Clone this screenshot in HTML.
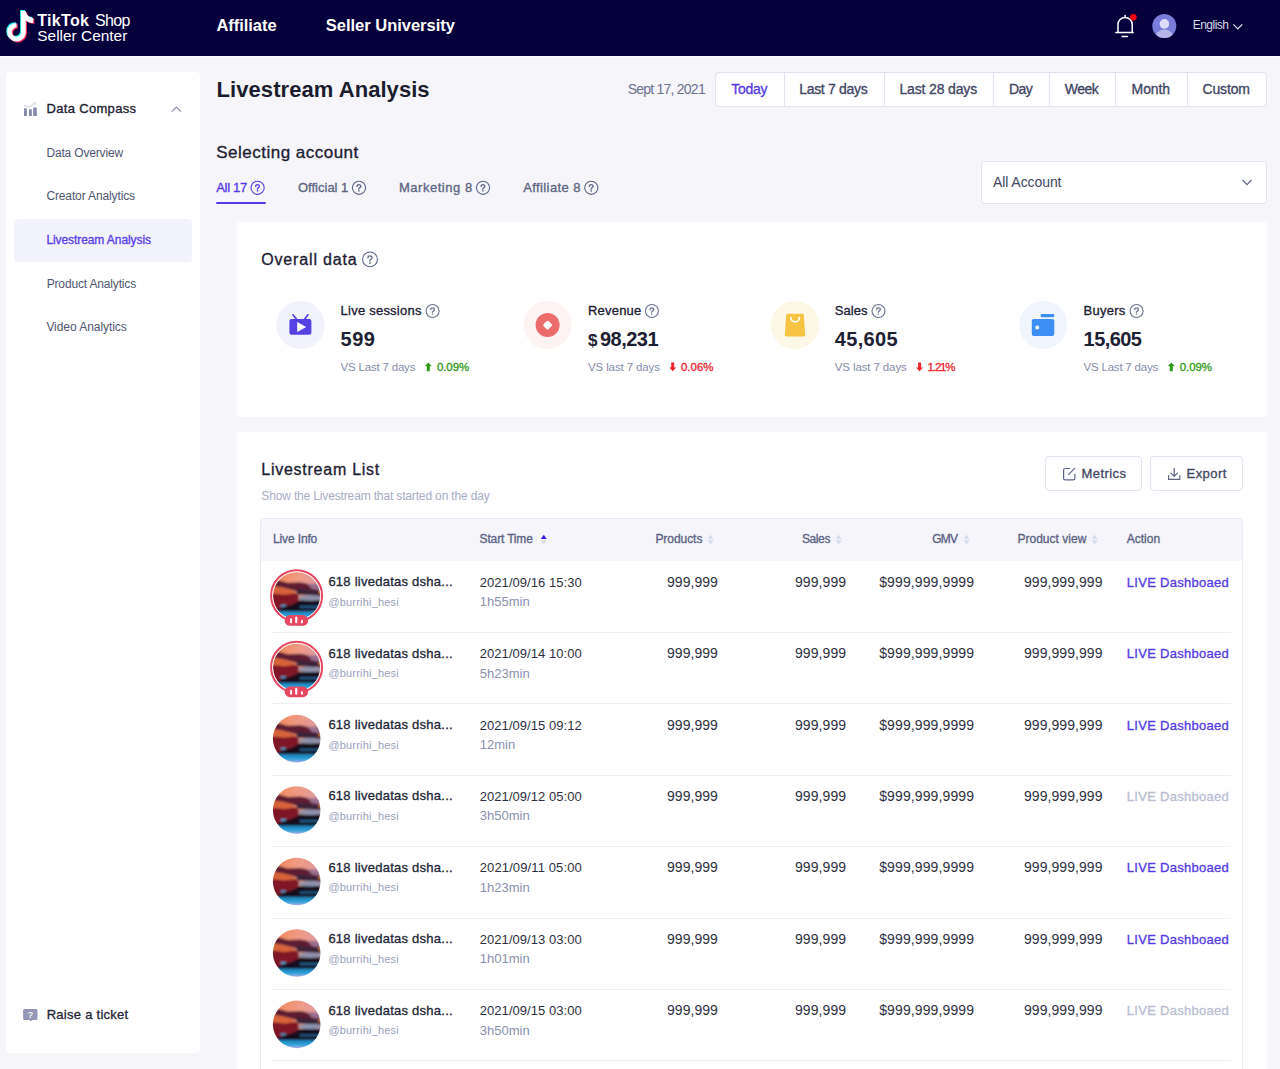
<!DOCTYPE html>
<html><head><meta charset="utf-8"><title>Livestream Analysis</title>
<style>
html,body{margin:0;padding:0;}
body{width:1280px;height:1069px;overflow:hidden;position:relative;background:#f5f5fa;font-family:"Liberation Sans", sans-serif;}
.t{position:absolute;white-space:nowrap;line-height:1;}
.a{position:absolute;box-sizing:border-box;}
svg{position:absolute;overflow:visible;}
</style></head><body>
<div class="a" style="left:0;top:0;width:1280px;height:56px;background:#05003c"></div>
<div class="a" style="left:0;top:56px;width:1280px;height:1px;background:#fbfbfe"></div>
<svg width="1" height="1" style="left:0;top:0"><path d="M21.1 11H25.8C26.1 14.5 28.8 17.5 33.2 18V23C30.3 23 27.8 22 25.8 20.5V32.2A9.3 9.3 0 1 1 16.5 22.9V27.6A4.6 4.6 0 1 0 21.1 32.2Z" fill="#25f4ee" transform="translate(-1,-1)"/><path d="M21.1 11H25.8C26.1 14.5 28.8 17.5 33.2 18V23C30.3 23 27.8 22 25.8 20.5V32.2A9.3 9.3 0 1 1 16.5 22.9V27.6A4.6 4.6 0 1 0 21.1 32.2Z" fill="#fe2c55" transform="translate(1.2,1)"/><path d="M21.1 11H25.8C26.1 14.5 28.8 17.5 33.2 18V23C30.3 23 27.8 22 25.8 20.5V32.2A9.3 9.3 0 1 1 16.5 22.9V27.6A4.6 4.6 0 1 0 21.1 32.2Z" fill="#fff"/></svg>
<div class="t" style="left:37.30px;top:13.00px;font-size:16px;font-weight:bold;color:#fff;letter-spacing:0.301px;">TikTok</div>
<div class="t" style="left:94.90px;top:13.00px;font-size:16px;color:#fff;letter-spacing:-0.592px;">Shop</div>
<div class="t" style="left:37.30px;top:28.00px;font-size:15.4px;color:#fff;letter-spacing:0.014px;">Seller Center</div>
<div class="t" style="left:216.40px;top:17.00px;font-size:16.5px;font-weight:bold;color:#fff;letter-spacing:-0.039px;">Affiliate</div>
<div class="t" style="left:325.80px;top:17.00px;font-size:16.5px;font-weight:bold;color:#fff;letter-spacing:-0.014px;">Seller University</div>
<svg width="1" height="1" style="left:0;top:0"><g fill="none" stroke="#fff" stroke-width="1.5" stroke-linecap="round"><path d="M1118 32.4V24.5A7.1 7.1 0 0 1 1132.2 24.5V32.4"/><path d="M1115.8 32.4H1133.2"/><path d="M1125.1 15.6V17.4"/><path d="M1122.2 36.4H1127.4"/></g><circle cx="1133.4" cy="17.3" r="3.3" fill="#f40010"/></svg>
<svg width="1" height="1" style="left:0;top:0"><defs><clipPath id="avc"><circle cx="1164.3" cy="26" r="12"/></clipPath></defs><circle cx="1164.3" cy="26" r="12" fill="#7a7cda"/><g clip-path="url(#avc)"><ellipse cx="1164.3" cy="39" rx="9.5" ry="9.5" fill="#b6b5ea"/></g><circle cx="1164.4" cy="23.9" r="4.8" fill="#dddcf8"/></svg>
<div class="t" style="left:1192.65px;top:19.00px;font-size:12px;color:#d8d8ea;letter-spacing:-0.493px;">English</div>
<svg width="1" height="1" style="left:0;top:0"><polyline points="1233.3,24.4 1237.8,28.9 1242.3,24.4" fill="none" stroke="#d8d8ea" stroke-width="1.3"/></svg>
<div class="a" style="left:6px;top:72px;width:194px;height:981px;background:#fff;border-radius:4px"></div>
<svg width="1" height="1" style="left:0;top:0"><g fill="#8589ab"><rect x="24" y="108.2" width="2.9" height="7.7" rx="0.5"/><rect x="28.95" y="109.2" width="2.9" height="6.7" rx="0.5"/><rect x="33.2" y="107.5" width="3.6" height="8.4" rx="0.5"/></g><polyline points="24.1,105.6 29,106.8 33.4,104.6" fill="none" stroke="#d5d8e6" stroke-width="1.4"/><path d="M32.6 102.6L36.2 102.6L35.2 106Z" fill="#d5d8e6"/></svg>
<div class="t" style="left:46.60px;top:102.00px;font-size:13px;color:#1d2033;-webkit-text-stroke:0.32px #1d2033;letter-spacing:0.311px;">Data Compass</div>
<svg width="1" height="1" style="left:0;top:0"><polyline points="171.8,111.6 176.4,107 181,111.6" fill="none" stroke="#8a8fa8" stroke-width="1.2"/></svg>
<div class="t" style="left:46.40px;top:147.00px;font-size:12px;color:#4f5672;letter-spacing:-0.167px;">Data Overview</div>
<div class="t" style="left:46.40px;top:190.00px;font-size:12px;color:#4f5672;letter-spacing:-0.125px;">Creator Analytics</div>
<div class="a" style="left:14px;top:219px;width:178px;height:43px;background:#f3f3fe;border-radius:4px"></div>
<div class="t" style="left:46.40px;top:234.00px;font-size:12px;color:#5a3ee6;-webkit-text-stroke:0.32px #5a3ee6;letter-spacing:-0.080px;">Livestream Analysis</div>
<div class="t" style="left:46.70px;top:278.00px;font-size:12px;color:#4f5672;letter-spacing:-0.159px;">Product Analytics</div>
<div class="t" style="left:46.40px;top:321.00px;font-size:12px;color:#4f5672;letter-spacing:-0.055px;">Video Analytics</div>
<svg width="1" height="1" style="left:0;top:0"><path d="M24.6 1009H36C36.8 1009 37.5 1009.7 37.5 1010.5V1018.4C37.5 1019.2 36.8 1019.9 36 1019.9H32.4L31 1021.2L29.6 1019.9H24.6C23.8 1019.9 23.1 1019.2 23.1 1018.4V1010.5C23.1 1009.7 23.8 1009 24.6 1009Z" fill="#9497b8"/></svg>
<div class="t" style="left:27.79px;top:1011.00px;font-size:9px;color:#fff;-webkit-text-stroke:0.2px #fff;">?</div>
<div class="t" style="left:46.70px;top:1008.00px;font-size:13px;color:#252838;-webkit-text-stroke:0.32px #252838;letter-spacing:0.266px;">Raise a ticket</div>
<div class="t" style="left:216.60px;top:79.00px;font-size:22px;font-weight:bold;color:#1b1d2e;letter-spacing:0.057px;">Livestream Analysis</div>
<div class="t" style="left:627.70px;top:82.00px;font-size:14px;color:#6c7290;letter-spacing:-0.766px;">Sept 17, 2021</div>
<div class="a" style="left:715px;top:72px;width:551.5px;height:35px;background:#fff;border:1px solid #e1e3f1;border-radius:4px"></div>
<div class="a" style="left:783.5px;top:73px;width:1px;height:33px;background:#e1e3f1"></div>
<div class="a" style="left:883.5px;top:73px;width:1px;height:33px;background:#e1e3f1"></div>
<div class="a" style="left:993px;top:73px;width:1px;height:33px;background:#e1e3f1"></div>
<div class="a" style="left:1048.5px;top:73px;width:1px;height:33px;background:#e1e3f1"></div>
<div class="a" style="left:1115px;top:73px;width:1px;height:33px;background:#e1e3f1"></div>
<div class="a" style="left:1186.5px;top:73px;width:1px;height:33px;background:#e1e3f1"></div>
<div class="t" style="left:731.20px;top:82.00px;font-size:14px;color:#553be6;-webkit-text-stroke:0.32px #553be6;letter-spacing:-0.265px;">Today</div>
<div class="t" style="left:799.20px;top:82.00px;font-size:14px;color:#3f4663;-webkit-text-stroke:0.32px #3f4663;letter-spacing:-0.301px;">Last 7 days</div>
<div class="t" style="left:899.40px;top:82.00px;font-size:14px;color:#3f4663;-webkit-text-stroke:0.32px #3f4663;letter-spacing:-0.145px;">Last 28 days</div>
<div class="t" style="left:1009.00px;top:82.00px;font-size:14px;color:#3f4663;-webkit-text-stroke:0.32px #3f4663;letter-spacing:-0.553px;">Day</div>
<div class="t" style="left:1064.70px;top:82.00px;font-size:14px;color:#3f4663;-webkit-text-stroke:0.32px #3f4663;letter-spacing:-0.516px;">Week</div>
<div class="t" style="left:1131.60px;top:82.00px;font-size:14px;color:#3f4663;-webkit-text-stroke:0.32px #3f4663;letter-spacing:-0.130px;">Month</div>
<div class="t" style="left:1202.50px;top:82.00px;font-size:14px;color:#3f4663;-webkit-text-stroke:0.32px #3f4663;letter-spacing:-0.147px;">Custom</div>
<div class="t" style="left:216.25px;top:144.00px;font-size:17px;color:#1d2033;-webkit-text-stroke:0.32px #1d2033;letter-spacing:0.487px;">Selecting account</div>
<div class="t" style="left:216.25px;top:181.00px;font-size:13px;color:#553be6;-webkit-text-stroke:0.32px #553be6;letter-spacing:-0.306px;">All 17</div>
<svg width="1" height="1" style="left:0;top:0"><g transform="translate(257.6,187.8) scale(0.892)" fill="none" stroke="#553be6"><circle r="7.4" stroke-width="1.23"/><path d="M-2.1 -1.5C-2.1 -2.8 -1.2 -3.5 0 -3.5C1.2 -3.5 2.1 -2.7 2.1 -1.6C2.1 -0.3 -0.1 0.2 -0.3 1.4" stroke-width="1.46" stroke-linecap="round"/><circle cx="-0.1" cy="3.5" r="0.9" fill="#553be6" stroke="none"/></g></svg>
<div class="t" style="left:298.00px;top:181.00px;font-size:13px;color:#5d6584;-webkit-text-stroke:0.32px #5d6584;">Official 1</div>
<svg width="1" height="1" style="left:0;top:0"><g transform="translate(359,187.8) scale(0.892)" fill="none" stroke="#5d6584"><circle r="7.4" stroke-width="1.23"/><path d="M-2.1 -1.5C-2.1 -2.8 -1.2 -3.5 0 -3.5C1.2 -3.5 2.1 -2.7 2.1 -1.6C2.1 -0.3 -0.1 0.2 -0.3 1.4" stroke-width="1.46" stroke-linecap="round"/><circle cx="-0.1" cy="3.5" r="0.9" fill="#5d6584" stroke="none"/></g></svg>
<div class="t" style="left:398.90px;top:181.00px;font-size:13px;color:#5d6584;-webkit-text-stroke:0.32px #5d6584;letter-spacing:0.538px;">Marketing 8</div>
<svg width="1" height="1" style="left:0;top:0"><g transform="translate(483,187.8) scale(0.892)" fill="none" stroke="#5d6584"><circle r="7.4" stroke-width="1.23"/><path d="M-2.1 -1.5C-2.1 -2.8 -1.2 -3.5 0 -3.5C1.2 -3.5 2.1 -2.7 2.1 -1.6C2.1 -0.3 -0.1 0.2 -0.3 1.4" stroke-width="1.46" stroke-linecap="round"/><circle cx="-0.1" cy="3.5" r="0.9" fill="#5d6584" stroke="none"/></g></svg>
<div class="t" style="left:523.20px;top:181.00px;font-size:13px;color:#5d6584;-webkit-text-stroke:0.32px #5d6584;letter-spacing:0.395px;">Affiliate 8</div>
<svg width="1" height="1" style="left:0;top:0"><g transform="translate(591.3,187.8) scale(0.892)" fill="none" stroke="#5d6584"><circle r="7.4" stroke-width="1.23"/><path d="M-2.1 -1.5C-2.1 -2.8 -1.2 -3.5 0 -3.5C1.2 -3.5 2.1 -2.7 2.1 -1.6C2.1 -0.3 -0.1 0.2 -0.3 1.4" stroke-width="1.46" stroke-linecap="round"/><circle cx="-0.1" cy="3.5" r="0.9" fill="#5d6584" stroke="none"/></g></svg>
<div class="a" style="left:216px;top:202px;width:49.6px;height:2px;background:#553be6;border-radius:1px"></div>
<div class="a" style="left:981px;top:160.5px;width:285.5px;height:43px;background:#fff;border:1px solid #e1e3f1;border-radius:4px"></div>
<div class="t" style="left:993.00px;top:175.00px;font-size:14px;color:#3f4663;letter-spacing:-0.077px;">All Account</div>
<svg width="1" height="1" style="left:0;top:0"><polyline points="1242.6,180 1247,184.6 1251.4,180" fill="none" stroke="#5d6584" stroke-width="1.2"/></svg>
<div class="a" style="left:237px;top:222px;width:1029.5px;height:194.5px;background:#fff;border-radius:4px"></div>
<div class="t" style="left:261.25px;top:252.00px;font-size:16px;color:#1d2033;-webkit-text-stroke:0.32px #1d2033;letter-spacing:0.839px;">Overall data</div>
<svg width="1" height="1" style="left:0;top:0"><g transform="translate(370,259.4) scale(1.000)" fill="none" stroke="#5d6585"><circle r="7.4" stroke-width="1.10"/><path d="M-2.1 -1.5C-2.1 -2.8 -1.2 -3.5 0 -3.5C1.2 -3.5 2.1 -2.7 2.1 -1.6C2.1 -0.3 -0.1 0.2 -0.3 1.4" stroke-width="1.30" stroke-linecap="round"/><circle cx="-0.1" cy="3.5" r="0.9" fill="#5d6585" stroke="none"/></g></svg>
<svg width="1" height="1" style="left:0;top:0"><circle cx="300.5" cy="325" r="24" fill="#f2f2fd"/><rect x="289.4" y="318.9" width="22" height="15.8" rx="2" fill="#5641e3"/><path d="M293 314.8L296.3 319M308 314.8L304.7 319" stroke="#5641e3" stroke-width="1.7" stroke-linecap="round"/><path d="M297.6 322.6L305.4 327L297.6 331.4Z" fill="#fff" stroke="#fff" stroke-width="0.8" stroke-linejoin="round"/><circle cx="547.6" cy="325" r="24" fill="#fdf3f3"/><circle cx="547.6" cy="325" r="12" fill="#ec6b6b"/><rect x="544.1" y="321.6" width="7" height="7" rx="1.5" fill="#fff" transform="rotate(45 547.6 325.1)"/><circle cx="795" cy="325" r="24" fill="#fdf8e6"/><path d="M787.5 313.7H802.5C803.2 313.7 803.7 314.2 803.8 314.9L805.2 334.8C805.3 335.7 804.6 336.4 803.7 336.4H786.3C785.4 336.4 784.7 335.7 784.8 334.8L786.2 314.9C786.3 314.2 786.8 313.7 787.5 313.7Z" fill="#f6c343"/><path d="M790.8 317.6A4.3 4.3 0 0 0 799.4 317.6" fill="none" stroke="#fff" stroke-width="1.6" stroke-linecap="round"/><circle cx="1043.3" cy="325" r="24" fill="#f0f5fe"/><rect x="1031.8" y="318.9" width="22.5" height="17.2" rx="2" fill="#3d8ff5"/><rect x="1040.6" y="314" width="13.7" height="3.3" rx="1.3" fill="#3d8ff5"/><circle cx="1037.2" cy="327.5" r="1.9" fill="#fff"/></svg>
<div class="t" style="left:340.60px;top:304.00px;font-size:13px;color:#1d2033;-webkit-text-stroke:0.32px #1d2033;letter-spacing:0.229px;">Live sessions</div>
<svg width="1" height="1" style="left:0;top:0"><g transform="translate(432.6,311) scale(0.878)" fill="none" stroke="#6b7290"><circle r="7.4" stroke-width="1.25"/><path d="M-2.1 -1.5C-2.1 -2.8 -1.2 -3.5 0 -3.5C1.2 -3.5 2.1 -2.7 2.1 -1.6C2.1 -0.3 -0.1 0.2 -0.3 1.4" stroke-width="1.48" stroke-linecap="round"/><circle cx="-0.1" cy="3.5" r="0.9" fill="#6b7290" stroke="none"/></g></svg>
<div class="t" style="left:340.60px;top:329.00px;font-size:20px;font-weight:bold;color:#1d2033;letter-spacing:0.512px;">599</div>
<div class="t" style="left:340.60px;top:362.00px;font-size:11.5px;color:#868ca9;letter-spacing:-0.197px;">VS Last 7 days</div>
<svg width="1" height="1" style="left:0;top:0"><path d="M428.3 362.5L431.8 366.3H429.8V371.2H426.8V366.3H424.8Z" fill="#2f9a17"/></svg>
<div class="t" style="left:436.90px;top:362.00px;font-size:11.5px;color:#2f9a17;-webkit-text-stroke:0.32px #2f9a17;letter-spacing:-0.077px;">0.09%</div>
<div class="t" style="left:588.00px;top:304.00px;font-size:13px;color:#1d2033;-webkit-text-stroke:0.32px #1d2033;letter-spacing:0.209px;">Revenue</div>
<svg width="1" height="1" style="left:0;top:0"><g transform="translate(651.9,311) scale(0.878)" fill="none" stroke="#6b7290"><circle r="7.4" stroke-width="1.25"/><path d="M-2.1 -1.5C-2.1 -2.8 -1.2 -3.5 0 -3.5C1.2 -3.5 2.1 -2.7 2.1 -1.6C2.1 -0.3 -0.1 0.2 -0.3 1.4" stroke-width="1.48" stroke-linecap="round"/><circle cx="-0.1" cy="3.5" r="0.9" fill="#6b7290" stroke="none"/></g></svg>
<div class="t" style="left:588.00px;top:332.00px;font-size:17px;font-weight:bold;color:#1d2033;">$</div>
<div class="t" style="left:600.00px;top:329.00px;font-size:20px;font-weight:bold;color:#1d2033;letter-spacing:-0.534px;">98,231</div>
<div class="t" style="left:588.00px;top:362.00px;font-size:11.5px;color:#868ca9;letter-spacing:-0.117px;">VS last 7 days</div>
<svg width="1" height="1" style="left:0;top:0"><path d="M672.7 371.2L676.2 367.4H674.2V362.5H671.2V367.4H669.2Z" fill="#f0242b"/></svg>
<div class="t" style="left:680.90px;top:362.00px;font-size:11.5px;color:#f0242b;-webkit-text-stroke:0.32px #f0242b;">0.06%</div>
<div class="t" style="left:834.80px;top:304.00px;font-size:13px;color:#1d2033;-webkit-text-stroke:0.32px #1d2033;letter-spacing:0.017px;">Sales</div>
<svg width="1" height="1" style="left:0;top:0"><g transform="translate(878.5,311) scale(0.878)" fill="none" stroke="#6b7290"><circle r="7.4" stroke-width="1.25"/><path d="M-2.1 -1.5C-2.1 -2.8 -1.2 -3.5 0 -3.5C1.2 -3.5 2.1 -2.7 2.1 -1.6C2.1 -0.3 -0.1 0.2 -0.3 1.4" stroke-width="1.48" stroke-linecap="round"/><circle cx="-0.1" cy="3.5" r="0.9" fill="#6b7290" stroke="none"/></g></svg>
<div class="t" style="left:834.80px;top:329.00px;font-size:20px;font-weight:bold;color:#1d2033;letter-spacing:0.306px;">45,605</div>
<div class="t" style="left:834.80px;top:362.00px;font-size:11.5px;color:#868ca9;letter-spacing:-0.117px;">VS last 7 days</div>
<svg width="1" height="1" style="left:0;top:0"><path d="M919.6 371.2L923.1 367.4H921.1V362.5H918.1V367.4H916.1Z" fill="#f0242b"/></svg>
<div class="t" style="left:927.60px;top:362.00px;font-size:11.5px;color:#f0242b;-webkit-text-stroke:0.32px #f0242b;letter-spacing:-1.152px;">1.21%</div>
<div class="t" style="left:1083.60px;top:304.00px;font-size:13px;color:#1d2033;-webkit-text-stroke:0.32px #1d2033;letter-spacing:0.226px;">Buyers</div>
<svg width="1" height="1" style="left:0;top:0"><g transform="translate(1136.6,311) scale(0.878)" fill="none" stroke="#6b7290"><circle r="7.4" stroke-width="1.25"/><path d="M-2.1 -1.5C-2.1 -2.8 -1.2 -3.5 0 -3.5C1.2 -3.5 2.1 -2.7 2.1 -1.6C2.1 -0.3 -0.1 0.2 -0.3 1.4" stroke-width="1.48" stroke-linecap="round"/><circle cx="-0.1" cy="3.5" r="0.9" fill="#6b7290" stroke="none"/></g></svg>
<div class="t" style="left:1083.60px;top:329.00px;font-size:20px;font-weight:bold;color:#1d2033;letter-spacing:-0.554px;">15,605</div>
<div class="t" style="left:1083.60px;top:362.00px;font-size:11.5px;color:#868ca9;letter-spacing:-0.212px;">VS Last 7 days</div>
<svg width="1" height="1" style="left:0;top:0"><path d="M1171.3 362.5L1174.8 366.3H1172.8V371.2H1169.8V366.3H1167.8Z" fill="#2f9a17"/></svg>
<div class="t" style="left:1179.80px;top:362.00px;font-size:11.5px;color:#2f9a17;-webkit-text-stroke:0.32px #2f9a17;letter-spacing:-0.102px;">0.09%</div>
<div class="a" style="left:237px;top:432px;width:1029.5px;height:700px;background:#fff;border-radius:4px"></div>
<div class="t" style="left:261.30px;top:462.00px;font-size:16px;color:#1d2033;-webkit-text-stroke:0.32px #1d2033;letter-spacing:0.743px;">Livestream List</div>
<div class="t" style="left:261.30px;top:490.00px;font-size:12px;color:#a7acc5;letter-spacing:-0.150px;">Show the Livestream that started on the day</div>
<div class="a" style="left:1045.3px;top:456.2px;width:97px;height:35.2px;background:#fff;border:1px solid #e1e3f1;border-radius:4px"></div>
<div class="a" style="left:1150.2px;top:456.2px;width:92.4px;height:35.2px;background:#fff;border:1px solid #e1e3f1;border-radius:4px"></div>
<div class="t" style="left:1081.40px;top:467.00px;font-size:13px;color:#3f4663;-webkit-text-stroke:0.32px #3f4663;letter-spacing:0.468px;">Metrics</div>
<div class="t" style="left:1186.60px;top:467.00px;font-size:13px;color:#3f4663;-webkit-text-stroke:0.32px #3f4663;letter-spacing:0.424px;">Export</div>
<svg width="1" height="1" style="left:0;top:0"><g fill="none" stroke="#5d6584" stroke-width="1.2" stroke-linecap="round" stroke-linejoin="round"><path d="M1069.5 468.5H1065.2C1064.3 468.5 1063.6 469.2 1063.6 470.1V478.2C1063.6 479.1 1064.3 479.8 1065.2 479.8H1073.3C1074.2 479.8 1074.9 479.1 1074.9 478.2V474"/><path d="M1068.6 474.6L1074.6 468.4"/><path d="M1174.2 468.3V476.2M1171 473.2L1174.2 476.4L1177.4 473.2"/><path d="M1168.6 475.5V479.4H1179.8V475.5"/></g></svg>
<div class="a" style="left:260.2px;top:518px;width:983.3px;height:620px;border:1px solid #e9eaf4;border-radius:4px;background:#fff;overflow:hidden"><div style="position:absolute;left:0;top:0;right:0;height:41.5px;background:#f5f5fa"></div></div>
<div class="t" style="left:273.00px;top:533.00px;font-size:12px;color:#5c6385;-webkit-text-stroke:0.32px #5c6385;letter-spacing:-0.134px;">Live Info</div>
<div class="t" style="left:479.60px;top:533.00px;font-size:12px;color:#5c6385;-webkit-text-stroke:0.32px #5c6385;letter-spacing:-0.154px;">Start Time</div>
<svg width="1" height="1" style="left:0;top:0"><path d="M540.8 538.9L543.8 534.8L546.8 538.9Z" fill="#3a1fe0"/><path d="M540.8 540.3L543.8 544.4L546.8 540.3Z" fill="#d8dcec"/></svg>
<div class="t" style="left:655.40px;top:533.00px;font-size:12px;color:#5c6385;-webkit-text-stroke:0.32px #5c6385;letter-spacing:-0.051px;">Products</div>
<svg width="1" height="1" style="left:0;top:0"><path d="M707.7 538.9L710.7 534.8L713.7 538.9Z" fill="#d8dcec"/><path d="M707.7 540.3L710.7 544.4L713.7 540.3Z" fill="#d8dcec"/></svg>
<div class="t" style="left:802.00px;top:533.00px;font-size:12px;color:#5c6385;-webkit-text-stroke:0.32px #5c6385;letter-spacing:-0.408px;">Sales</div>
<svg width="1" height="1" style="left:0;top:0"><path d="M835.8 538.9L838.8 534.8L841.8 538.9Z" fill="#d8dcec"/><path d="M835.8 540.3L838.8 544.4L841.8 540.3Z" fill="#d8dcec"/></svg>
<div class="t" style="left:932.20px;top:533.00px;font-size:12px;color:#5c6385;-webkit-text-stroke:0.32px #5c6385;letter-spacing:-0.772px;">GMV</div>
<svg width="1" height="1" style="left:0;top:0"><path d="M963.7 538.9L966.7 534.8L969.7 538.9Z" fill="#d8dcec"/><path d="M963.7 540.3L966.7 544.4L969.7 540.3Z" fill="#d8dcec"/></svg>
<div class="t" style="left:1017.40px;top:533.00px;font-size:12px;color:#5c6385;-webkit-text-stroke:0.32px #5c6385;letter-spacing:0.027px;">Product view</div>
<svg width="1" height="1" style="left:0;top:0"><path d="M1091.8 538.9L1094.8 534.8L1097.8 538.9Z" fill="#d8dcec"/><path d="M1091.8 540.3L1094.8 544.4L1097.8 540.3Z" fill="#d8dcec"/></svg>
<div class="t" style="left:1126.70px;top:533.00px;font-size:12px;color:#5c6385;-webkit-text-stroke:0.32px #5c6385;letter-spacing:0.028px;">Action</div>
<svg width="0" height="0" style="left:0;top:0"><defs><linearGradient id="sky" x1="0" y1="0" x2="1" y2="0.2"><stop offset="0" stop-color="#f5844f"/><stop offset="0.55" stop-color="#f09a84"/><stop offset="1" stop-color="#d99aa4"/></linearGradient><linearGradient id="sea" x1="0" y1="0" x2="0" y2="1"><stop offset="0" stop-color="#1f7fb8"/><stop offset="0.55" stop-color="#2ba3da"/><stop offset="1" stop-color="#b9b3f4"/></linearGradient><filter id="avblur" x="-5%" y="-5%" width="110%" height="110%"><feGaussianBlur stdDeviation="0.9"/></filter><clipPath id="avclip"><circle cx="24" cy="24" r="23.8"/></clipPath><symbol id="avimg" viewBox="0 0 48 48"><g clip-path="url(#avclip)"><g filter="url(#avblur)"><rect x="-2" y="-2" width="52" height="52" fill="url(#sky)"/><path d="M36 12L50 12L50 19L36 19Z" fill="#9a6e8e"/><path d="M-2 7L8 9L15 11L28 10.5L35 12L39 17L50 19L50 24L30 22L20 18.5L10 16L-2 14Z" fill="#5f1d33"/><path d="M24 17L50 19L50 24L24 23Z" fill="#3b2439"/><path d="M-2 14L10 16L20 19L24 22L10 23.5L-2 22.5Z" fill="#d8643a"/><path d="M-2 28.5H50V40H-2Z" fill="#15101b"/><ellipse cx="37.5" cy="26.3" rx="11.5" ry="2.6" fill="#7d94b0"/><path d="M29 26.5H46" stroke="#c08a98" stroke-width="0.8"/><path d="M-2 21.5L12 23L23 21.5L26.5 25L25 30L19 33L11 35L5 38L-2 39Z" fill="#7e1726"/><path d="M8 33H14L12 35H8Z" fill="#4aa0d0"/><path d="M27 34H48V36H27Z" fill="#1e6090"/><rect x="-2" y="39.5" width="52" height="9" fill="url(#sea)"/><circle cx="47.5" cy="20" r="1.5" fill="#f59a30"/></g></g></symbol></defs></svg>
<svg width="1" height="1" style="left:0;top:0"><use href="#avimg" x="272.7" y="571.80" width="48" height="48"/></svg>
<svg width="1" height="1" style="left:0;top:0"><circle cx="296.6" cy="595.80" r="25.4" fill="none" stroke="#e8485f" stroke-width="2.2"/><circle cx="296.6" cy="595.80" r="24" fill="none" stroke="#fff" stroke-width="0.8"/><rect x="284.7" y="615.10" width="23.4" height="10.6" rx="5.3" fill="#e5485f"/><rect x="290.1" y="618.30" width="1.9" height="5" rx="0.9" fill="#fff"/><rect x="295.2" y="616.40" width="2.1" height="6.9" rx="1" fill="#fff"/><rect x="301" y="619.80" width="1.9" height="3.5" rx="0.9" fill="#fff"/></svg>
<div class="t" style="left:328.40px;top:575.00px;font-size:13px;color:#232637;-webkit-text-stroke:0.32px #232637;letter-spacing:0.248px;">618 livedatas dsha...</div>
<div class="t" style="left:328.40px;top:597.00px;font-size:11px;color:#9a9fbb;letter-spacing:0.189px;">@burrihi_hesi</div>
<div class="t" style="left:479.75px;top:576.00px;font-size:13px;color:#2d3042;letter-spacing:0.052px;">2021/09/16 15:30</div>
<div class="t" style="left:479.75px;top:595.00px;font-size:13px;color:#8a90ae;">1h55min</div>
<div class="t" style="left:667.00px;top:575.00px;font-size:14px;color:#2d3042;letter-spacing:0.032px;">999,999</div>
<div class="t" style="left:794.90px;top:575.00px;font-size:14px;color:#2d3042;letter-spacing:0.098px;">999,999</div>
<div class="t" style="left:879.20px;top:575.00px;font-size:14px;color:#2d3042;letter-spacing:0.114px;">$999,999,9999</div>
<div class="t" style="left:1024.00px;top:575.00px;font-size:14px;color:#2d3042;letter-spacing:0.064px;">999,999,999</div>
<div class="t" style="left:1126.80px;top:576.00px;font-size:13px;color:#553be6;-webkit-text-stroke:0.32px #553be6;letter-spacing:0.285px;">LIVE Dashboaed</div>
<div class="a" style="left:272px;top:631.80px;width:959px;height:1px;background:#eff0f6"></div>
<svg width="1" height="1" style="left:0;top:0"><use href="#avimg" x="272.7" y="643.23" width="48" height="48"/></svg>
<svg width="1" height="1" style="left:0;top:0"><circle cx="296.6" cy="667.23" r="25.4" fill="none" stroke="#e8485f" stroke-width="2.2"/><circle cx="296.6" cy="667.23" r="24" fill="none" stroke="#fff" stroke-width="0.8"/><rect x="284.7" y="686.53" width="23.4" height="10.6" rx="5.3" fill="#e5485f"/><rect x="290.1" y="689.73" width="1.9" height="5" rx="0.9" fill="#fff"/><rect x="295.2" y="687.83" width="2.1" height="6.9" rx="1" fill="#fff"/><rect x="301" y="691.23" width="1.9" height="3.5" rx="0.9" fill="#fff"/></svg>
<div class="t" style="left:328.40px;top:647.00px;font-size:13px;color:#232637;-webkit-text-stroke:0.32px #232637;letter-spacing:0.248px;">618 livedatas dsha...</div>
<div class="t" style="left:328.40px;top:668.00px;font-size:11px;color:#9a9fbb;letter-spacing:0.189px;">@burrihi_hesi</div>
<div class="t" style="left:479.75px;top:647.00px;font-size:13px;color:#2d3042;letter-spacing:0.052px;">2021/09/14 10:00</div>
<div class="t" style="left:479.75px;top:667.00px;font-size:13px;color:#8a90ae;">5h23min</div>
<div class="t" style="left:667.00px;top:646.00px;font-size:14px;color:#2d3042;letter-spacing:0.032px;">999,999</div>
<div class="t" style="left:794.90px;top:646.00px;font-size:14px;color:#2d3042;letter-spacing:0.098px;">999,999</div>
<div class="t" style="left:879.20px;top:646.00px;font-size:14px;color:#2d3042;letter-spacing:0.114px;">$999,999,9999</div>
<div class="t" style="left:1024.00px;top:646.00px;font-size:14px;color:#2d3042;letter-spacing:0.064px;">999,999,999</div>
<div class="t" style="left:1126.80px;top:647.00px;font-size:13px;color:#553be6;-webkit-text-stroke:0.32px #553be6;letter-spacing:0.285px;">LIVE Dashboaed</div>
<div class="a" style="left:272px;top:703.23px;width:959px;height:1px;background:#eff0f6"></div>
<svg width="1" height="1" style="left:0;top:0"><use href="#avimg" x="272.7" y="714.66" width="48" height="48"/></svg>
<div class="t" style="left:328.40px;top:718.00px;font-size:13px;color:#232637;-webkit-text-stroke:0.32px #232637;letter-spacing:0.248px;">618 livedatas dsha...</div>
<div class="t" style="left:328.40px;top:740.00px;font-size:11px;color:#9a9fbb;letter-spacing:0.189px;">@burrihi_hesi</div>
<div class="t" style="left:479.75px;top:719.00px;font-size:13px;color:#2d3042;letter-spacing:0.052px;">2021/09/15 09:12</div>
<div class="t" style="left:479.75px;top:738.00px;font-size:13px;color:#8a90ae;">12min</div>
<div class="t" style="left:667.00px;top:718.00px;font-size:14px;color:#2d3042;letter-spacing:0.032px;">999,999</div>
<div class="t" style="left:794.90px;top:718.00px;font-size:14px;color:#2d3042;letter-spacing:0.098px;">999,999</div>
<div class="t" style="left:879.20px;top:718.00px;font-size:14px;color:#2d3042;letter-spacing:0.114px;">$999,999,9999</div>
<div class="t" style="left:1024.00px;top:718.00px;font-size:14px;color:#2d3042;letter-spacing:0.064px;">999,999,999</div>
<div class="t" style="left:1126.80px;top:719.00px;font-size:13px;color:#553be6;-webkit-text-stroke:0.32px #553be6;letter-spacing:0.285px;">LIVE Dashboaed</div>
<div class="a" style="left:272px;top:774.66px;width:959px;height:1px;background:#eff0f6"></div>
<svg width="1" height="1" style="left:0;top:0"><use href="#avimg" x="272.7" y="786.09" width="48" height="48"/></svg>
<div class="t" style="left:328.40px;top:789.00px;font-size:13px;color:#232637;-webkit-text-stroke:0.32px #232637;letter-spacing:0.248px;">618 livedatas dsha...</div>
<div class="t" style="left:328.40px;top:811.00px;font-size:11px;color:#9a9fbb;letter-spacing:0.189px;">@burrihi_hesi</div>
<div class="t" style="left:479.75px;top:790.00px;font-size:13px;color:#2d3042;letter-spacing:0.052px;">2021/09/12 05:00</div>
<div class="t" style="left:479.75px;top:809.00px;font-size:13px;color:#8a90ae;">3h50min</div>
<div class="t" style="left:667.00px;top:789.00px;font-size:14px;color:#2d3042;letter-spacing:0.032px;">999,999</div>
<div class="t" style="left:794.90px;top:789.00px;font-size:14px;color:#2d3042;letter-spacing:0.098px;">999,999</div>
<div class="t" style="left:879.20px;top:789.00px;font-size:14px;color:#2d3042;letter-spacing:0.114px;">$999,999,9999</div>
<div class="t" style="left:1024.00px;top:789.00px;font-size:14px;color:#2d3042;letter-spacing:0.064px;">999,999,999</div>
<div class="t" style="left:1126.80px;top:790.00px;font-size:13px;color:#b9bed3;-webkit-text-stroke:0.32px #b9bed3;letter-spacing:0.285px;">LIVE Dashboaed</div>
<div class="a" style="left:272px;top:846.09px;width:959px;height:1px;background:#eff0f6"></div>
<svg width="1" height="1" style="left:0;top:0"><use href="#avimg" x="272.7" y="857.52" width="48" height="48"/></svg>
<div class="t" style="left:328.40px;top:861.00px;font-size:13px;color:#232637;-webkit-text-stroke:0.32px #232637;letter-spacing:0.248px;">618 livedatas dsha...</div>
<div class="t" style="left:328.40px;top:882.00px;font-size:11px;color:#9a9fbb;letter-spacing:0.189px;">@burrihi_hesi</div>
<div class="t" style="left:479.75px;top:861.00px;font-size:13px;color:#2d3042;letter-spacing:0.117px;">2021/09/11 05:00</div>
<div class="t" style="left:479.75px;top:881.00px;font-size:13px;color:#8a90ae;">1h23min</div>
<div class="t" style="left:667.00px;top:860.00px;font-size:14px;color:#2d3042;letter-spacing:0.032px;">999,999</div>
<div class="t" style="left:794.90px;top:860.00px;font-size:14px;color:#2d3042;letter-spacing:0.098px;">999,999</div>
<div class="t" style="left:879.20px;top:860.00px;font-size:14px;color:#2d3042;letter-spacing:0.114px;">$999,999,9999</div>
<div class="t" style="left:1024.00px;top:860.00px;font-size:14px;color:#2d3042;letter-spacing:0.064px;">999,999,999</div>
<div class="t" style="left:1126.80px;top:861.00px;font-size:13px;color:#553be6;-webkit-text-stroke:0.32px #553be6;letter-spacing:0.285px;">LIVE Dashboaed</div>
<div class="a" style="left:272px;top:917.52px;width:959px;height:1px;background:#eff0f6"></div>
<svg width="1" height="1" style="left:0;top:0"><use href="#avimg" x="272.7" y="928.95" width="48" height="48"/></svg>
<div class="t" style="left:328.40px;top:932.00px;font-size:13px;color:#232637;-webkit-text-stroke:0.32px #232637;letter-spacing:0.248px;">618 livedatas dsha...</div>
<div class="t" style="left:328.40px;top:954.00px;font-size:11px;color:#9a9fbb;letter-spacing:0.189px;">@burrihi_hesi</div>
<div class="t" style="left:479.75px;top:933.00px;font-size:13px;color:#2d3042;letter-spacing:0.052px;">2021/09/13 03:00</div>
<div class="t" style="left:479.75px;top:952.00px;font-size:13px;color:#8a90ae;">1h01min</div>
<div class="t" style="left:667.00px;top:932.00px;font-size:14px;color:#2d3042;letter-spacing:0.032px;">999,999</div>
<div class="t" style="left:794.90px;top:932.00px;font-size:14px;color:#2d3042;letter-spacing:0.098px;">999,999</div>
<div class="t" style="left:879.20px;top:932.00px;font-size:14px;color:#2d3042;letter-spacing:0.114px;">$999,999,9999</div>
<div class="t" style="left:1024.00px;top:932.00px;font-size:14px;color:#2d3042;letter-spacing:0.064px;">999,999,999</div>
<div class="t" style="left:1126.80px;top:933.00px;font-size:13px;color:#553be6;-webkit-text-stroke:0.32px #553be6;letter-spacing:0.285px;">LIVE Dashboaed</div>
<div class="a" style="left:272px;top:988.95px;width:959px;height:1px;background:#eff0f6"></div>
<svg width="1" height="1" style="left:0;top:0"><use href="#avimg" x="272.7" y="1000.38" width="48" height="48"/></svg>
<div class="t" style="left:328.40px;top:1004.00px;font-size:13px;color:#232637;-webkit-text-stroke:0.32px #232637;letter-spacing:0.248px;">618 livedatas dsha...</div>
<div class="t" style="left:328.40px;top:1025.00px;font-size:11px;color:#9a9fbb;letter-spacing:0.189px;">@burrihi_hesi</div>
<div class="t" style="left:479.75px;top:1004.00px;font-size:13px;color:#2d3042;letter-spacing:0.052px;">2021/09/15 03:00</div>
<div class="t" style="left:479.75px;top:1024.00px;font-size:13px;color:#8a90ae;">3h50min</div>
<div class="t" style="left:667.00px;top:1003.00px;font-size:14px;color:#2d3042;letter-spacing:0.032px;">999,999</div>
<div class="t" style="left:794.90px;top:1003.00px;font-size:14px;color:#2d3042;letter-spacing:0.098px;">999,999</div>
<div class="t" style="left:879.20px;top:1003.00px;font-size:14px;color:#2d3042;letter-spacing:0.114px;">$999,999,9999</div>
<div class="t" style="left:1024.00px;top:1003.00px;font-size:14px;color:#2d3042;letter-spacing:0.064px;">999,999,999</div>
<div class="t" style="left:1126.80px;top:1004.00px;font-size:13px;color:#b9bed3;-webkit-text-stroke:0.32px #b9bed3;letter-spacing:0.285px;">LIVE Dashboaed</div>
<div class="a" style="left:272px;top:1060.38px;width:959px;height:1px;background:#eff0f6"></div>
</body></html>
